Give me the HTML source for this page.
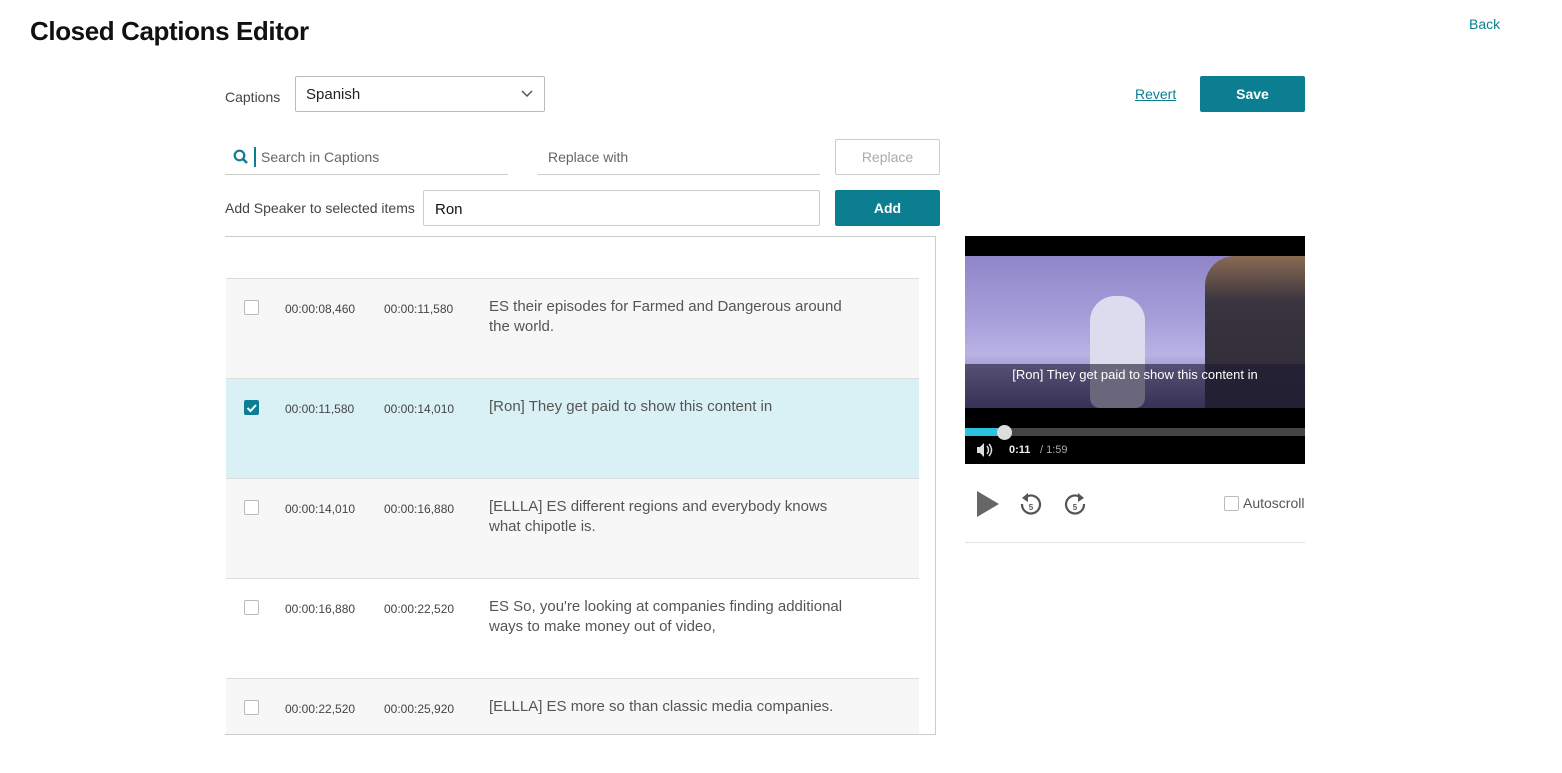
<!DOCTYPE html>
<html><head><style>
*{box-sizing:border-box;margin:0;padding:0}
body{width:1562px;height:773px;background:#fff;font-family:"Liberation Sans",sans-serif;color:#333;position:relative;overflow:hidden}
.a{position:absolute}
h1{position:absolute;left:30px;top:16px;font-size:26px;font-weight:bold;color:#111;letter-spacing:-0.4px}
.teal{color:#0b7f91}
.btn{position:absolute;background:#0b7f91;color:#fff;font-size:14px;font-weight:bold;text-align:center;border-radius:2px}
.row{position:absolute;left:226px;width:693px;height:100px;border-top:1px solid #ddd;font-size:12px}
.cb{position:absolute;left:18px;top:21px;width:15px;height:15px;border:1px solid #bbb;border-radius:2px;background:#fff}
.t1{position:absolute;left:59px;top:23px;color:#444}
.t2{position:absolute;left:158px;top:23px;color:#444}
.tx{position:absolute;left:263px;top:18px;width:370px;font-size:15px;line-height:20px;color:#555}
</style></head><body>
<h1>Closed Captions Editor</h1>
<div class="a teal" style="left:1469px;top:16px;font-size:14px">Back</div>
<div class="a" style="left:225px;top:89px;font-size:14px;color:#444">Captions</div>
<div class="a" style="left:295px;top:76px;width:250px;height:36px;border:1px solid #bbb;border-radius:2px;padding:9px 10px;font-size:15px;color:#222">Spanish
<svg class="a" style="left:225px;top:13px" width="12" height="8"><path d="M1 1l5 5 5-5" stroke="#555" stroke-width="1.5" fill="none"/></svg></div>
<div class="a teal" style="left:1135px;top:86px;font-size:14px;text-decoration:underline">Revert</div>
<div class="btn" style="left:1200px;top:76px;width:105px;height:36px;line-height:36px">Save</div>

<div class="a" style="left:225px;top:139px;width:283px;height:36px;border-bottom:1px solid #ccc">
<svg class="a" style="left:8px;top:10px" width="16" height="16"><circle cx="6.5" cy="6.5" r="4.8" stroke="#0b7f91" stroke-width="2.2" fill="none"/><path d="M10 10l4 4" stroke="#0b7f91" stroke-width="2.5"/></svg>
<div class="a" style="left:29px;top:8px;width:2px;height:20px;background:#0b7f91"></div>
<div class="a" style="left:36px;top:10px;font-size:14px;color:#666">Search in Captions</div></div>
<div class="a" style="left:538px;top:139px;width:282px;height:36px;border-bottom:1px solid #ccc">
<div class="a" style="left:10px;top:10px;font-size:14px;color:#666">Replace with</div></div>
<div class="a" style="left:835px;top:139px;width:105px;height:36px;border:1px solid #ccc;border-radius:2px;text-align:center;line-height:34px;font-size:14px;color:#aaa">Replace</div>

<div class="a" style="left:225px;top:200px;font-size:14px;color:#444">Add Speaker to selected items</div>
<div class="a" style="left:423px;top:190px;width:397px;height:36px;border:1px solid #ccc;border-radius:2px;padding:10px 11px;font-size:15px;color:#111">Ron</div>
<div class="btn" style="left:835px;top:190px;width:105px;height:36px;line-height:36px">Add</div>

<div class="a" style="left:225px;top:236px;width:711px;height:499px;border-top:1px solid #ccc;border-right:1px solid #ccc;border-bottom:1px solid #ccc;overflow:hidden">
</div>
<div class="row" style="top:278px;background:#f7f7f7"><div class="cb"></div><div class="t1">00:00:08,460</div><div class="t2">00:00:11,580</div><div class="tx">ES their episodes for Farmed and Dangerous around the world.</div></div>
<div class="row" style="top:378px;background:#d9f1f5"><div class="cb" style="background:#0b7f91;border-color:#0b7f91"><svg width="13" height="13" style="position:absolute;left:0;top:0"><path d="M2.5 7l3 3 5.5-6" stroke="#fff" stroke-width="2" fill="none"/></svg></div><div class="t1">00:00:11,580</div><div class="t2">00:00:14,010</div><div class="tx">[Ron] They get paid to show this content in</div></div>
<div class="row" style="top:478px;background:#f7f7f7"><div class="cb"></div><div class="t1">00:00:14,010</div><div class="t2">00:00:16,880</div><div class="tx">[ELLLA] ES different regions and everybody knows what chipotle is.</div></div>
<div class="row" style="top:578px;background:#fff"><div class="cb"></div><div class="t1">00:00:16,880</div><div class="t2">00:00:22,520</div><div class="tx">ES So, you're looking at companies finding additional ways to make money out of video,</div></div>
<div class="row" style="top:678px;height:56px;background:#f7f7f7"><div class="cb"></div><div class="t1">00:00:22,520</div><div class="t2">00:00:25,920</div><div class="tx">[ELLLA] ES more so than classic media companies.</div></div>

<div class="a" style="left:965px;top:236px;width:340px;height:228px;background:#000;overflow:hidden">
<div class="a" style="left:0;top:20px;width:340px;height:152px;background:linear-gradient(180deg,#8e86c8 0%,#a9a1dc 45%,#b9b3e4 65%,#5e5690 100%)"></div>
<div class="a" style="left:240px;top:20px;width:100px;height:152px;background:linear-gradient(180deg,#8a6a52 0%,#3a3540 30%,#2c2a35 100%);border-radius:30px 0 0 0"></div>
<div class="a" style="left:125px;top:60px;width:55px;height:112px;background:#dcdcee;border-radius:25px 25px 10px 10px"></div>
<div class="a" style="left:0;top:128px;width:340px;height:44px;background:rgba(30,25,50,.6)"></div>
<div class="a" style="left:0;top:131px;width:340px;text-align:center;color:#fff;font-size:13px">[Ron] They get paid to show this content in</div>
<div class="a" style="left:0;top:192px;width:340px;height:8px;background:#444"></div>
<div class="a" style="left:0;top:192px;width:40px;height:8px;background:#2bc2de"></div>
<div class="a" style="left:32px;top:189px;width:15px;height:15px;border-radius:50%;background:#ddd"></div>
<svg class="a" style="left:10px;top:206px" width="18" height="16"><path d="M2 5h3l4-4v14l-4-4H2z" fill="#ddd"/><path d="M12 4q3 4 0 8M14 2q5 6 0 12" stroke="#ddd" stroke-width="1.5" fill="none"/></svg>
<div class="a" style="left:44px;top:208px;color:#eee;font-size:11px;font-weight:bold">0:11</div>
<div class="a" style="left:75px;top:208px;color:#aaa;font-size:11px">/ 1:59</div>
</div>

<svg class="a" style="left:975px;top:490px" width="26" height="28"><path d="M2 1l22 13L2 27z" fill="#666"/></svg>
<svg class="a" style="left:1018px;top:492px" width="26" height="26"><path d="M8 5A9 9 0 1 1 4 12" stroke="#555" stroke-width="2.2" fill="none"/><path d="M10 1L4 6l6 4z" fill="#555"/><text x="13" y="18" font-size="8" font-weight="bold" text-anchor="middle" fill="#555" font-family="Liberation Sans">5</text></svg>
<svg class="a" style="left:1062px;top:492px" width="26" height="26"><path d="M18 5A9 9 0 1 0 22 12" stroke="#555" stroke-width="2.2" fill="none"/><path d="M16 1l6 5-6 4z" fill="#555"/><text x="13" y="18" font-size="8" font-weight="bold" text-anchor="middle" fill="#555" font-family="Liberation Sans">5</text></svg>
<div class="a" style="left:1224px;top:496px;width:15px;height:15px;border:1px solid #bbb;border-radius:2px"></div>
<div class="a" style="left:1243px;top:495px;font-size:14px;color:#555">Autoscroll</div>
<div class="a" style="left:965px;top:542px;width:340px;height:1px;background:#e3e3e3"></div>
</body></html>
